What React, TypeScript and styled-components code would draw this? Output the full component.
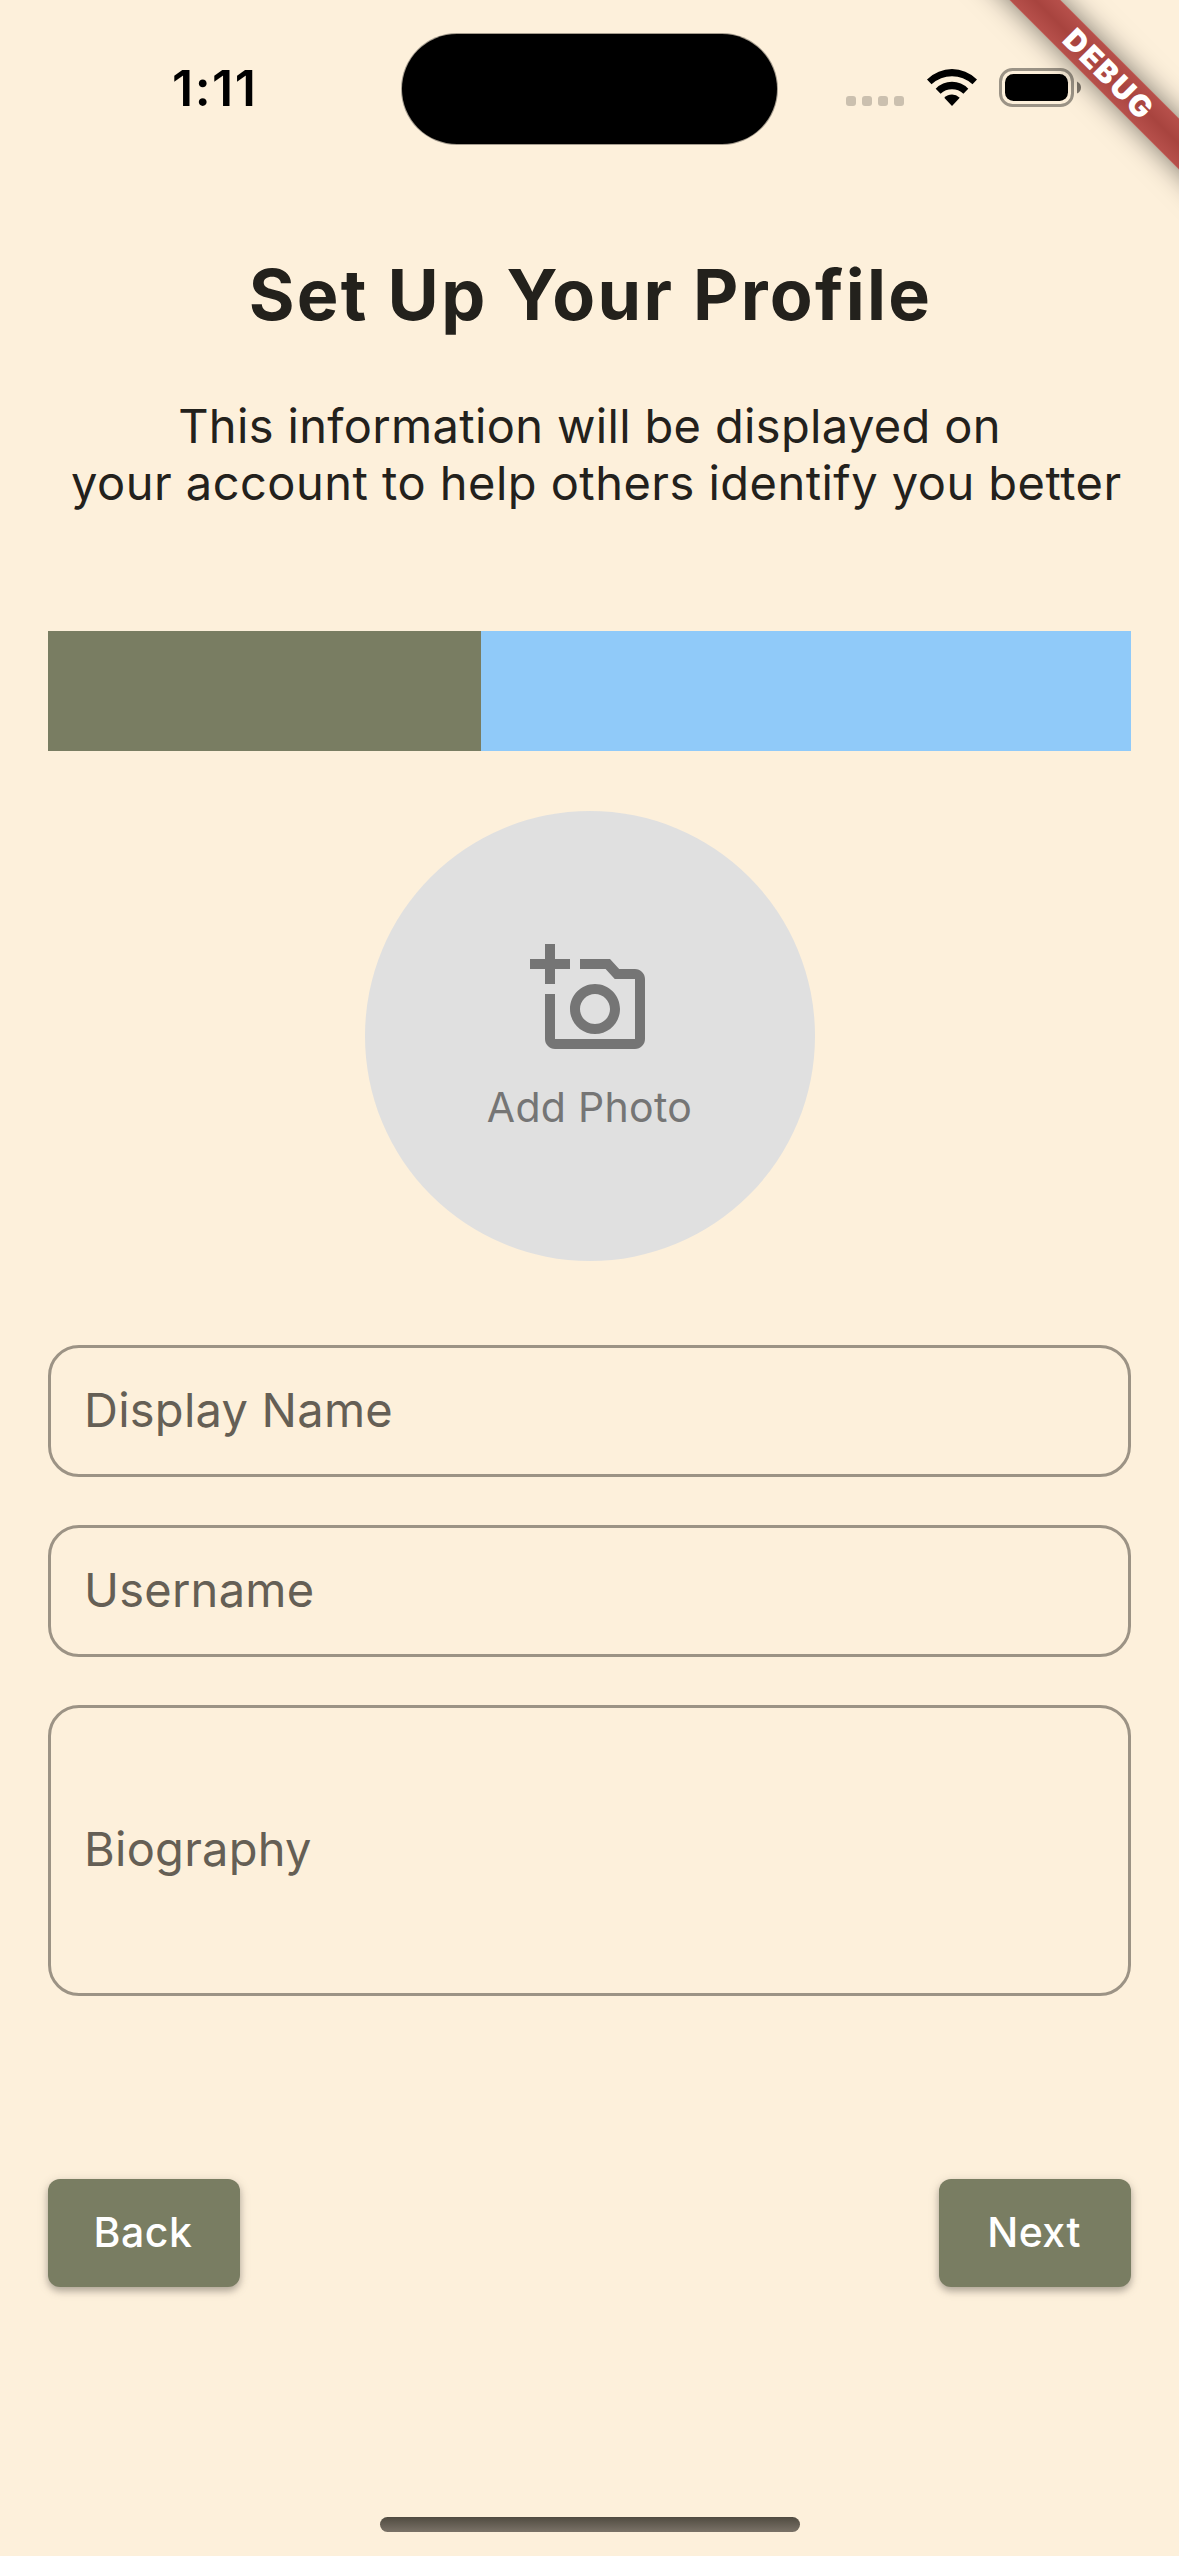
import React from "react";
import styled, { createGlobalStyle } from "styled-components";

const GlobalStyle = createGlobalStyle`
  * { box-sizing: border-box; }
  body { margin: 0; background: #fdf0db; }
`;

const Screen = styled.main`
  position: relative;
  display: flex;
  flex-direction: column;
  width: 1179px;
  height: 2556px;
  overflow: hidden;
  background: #fdf0db;
  color: #23211c;
  font-family: Inter, "Liberation Sans", sans-serif;
`;

const StatusBar = styled.header`
  display: grid;
  grid-template-columns: 402px 375px 1fr;
  height: 177px;
  padding-top: 34px;
  align-items: start;
`;

const Clock = styled.time`
  padding: 23px 0 0 172px;
  color: #000;
  font-size: 50px;
  font-weight: 600;
  line-height: 62px;
  letter-spacing: 1.5px;
`;

const Island = styled.div`
  height: 110px;
  border-radius: 55px;
  background: #000;
  box-shadow: 0 0 0 1px rgba(0, 0, 0, 0.35);
`;

const StatusIcons = styled.div`
  display: flex;
  align-items: flex-start;
  padding: 34px 0 0 69px;
`;

const SignalDots = styled.div`
  display: flex;
  gap: 6px;
  padding-top: 28px;
  margin-right: 22px;
`;

const Dot = styled.i`
  width: 10px;
  height: 10px;
  border-radius: 3px;
  background: #cbc0af;
`;

const WifiIcon = styled.svg`
  width: 52px;
  height: 39px;
  margin-right: 21px;
`;

const Battery = styled.svg`
  width: 84px;
  height: 39px;
`;

const DebugCorner = styled.div`
  position: absolute;
  top: 0;
  right: 0;
  width: 300px;
  height: 300px;
  overflow: hidden;
  pointer-events: none;
`;

const DebugRibbon = styled.div`
  position: absolute;
  top: 53.7px;
  left: -12.3px;
  width: 480px;
  height: 36px;
  padding-left: 6px;
  transform: rotate(45deg);
  background: linear-gradient(#b7504b, #a8443f 50%, #b7504b);
  box-shadow: 0 0 28px rgba(0, 0, 0, 0.5);
  color: #fff;
  text-align: center;
  font-size: 30px;
  font-weight: 900;
  line-height: 36px;
  letter-spacing: 2px;
`;

const Content = styled.div`
  display: flex;
  flex-direction: column;
  padding: 0 48px;
`;

const Title = styled.h1`
  margin: 75px 0 0;
  padding-left: 2px;
  text-align: center;
  font-size: 70px;
  font-weight: 700;
  line-height: 86px;
  letter-spacing: 2.3px;
  font-variant-ligatures: none;
`;

const Subtitle = styled.p`
  margin: 59px 0 0;
  text-align: center;
  font-size: 47px;
  line-height: 57px;
  white-space: nowrap;
`;

const SubtitleLine = styled.span<{ $spacing: number }>`
  display: block;
  letter-spacing: ${(p) => p.$spacing}px;
`;

const Progress = styled.div`
  display: flex;
  height: 120px;
  margin-top: 120px;
  background: #90caf9;
`;

const ProgressDone = styled.div`
  width: 40%;
  background: #797d62;
`;

const PhotoButton = styled.button`
  display: flex;
  flex-direction: column;
  align-items: center;
  align-self: center;
  width: 450px;
  height: 450px;
  margin-top: 60.4px;
  padding: 127.6px 0 0;
  border: 0;
  border-radius: 50%;
  background: #e0e0e0;
  color: #757575;
  font-family: inherit;
`;

const CameraIcon = styled.svg`
  width: 120px;
  height: 120px;
`;

const PhotoLabel = styled.span`
  margin-top: 18px;
  font-size: 41px;
  line-height: 60px;
  letter-spacing: 0.3px;
`;

const Form = styled.form`
  display: flex;
  flex-direction: column;
  gap: 48px;
  margin-top: 83.6px;
`;

const Field = styled.div<{ $height: number; $lift: number }>`
  display: flex;
  align-items: center;
  height: ${(p) => p.$height}px;
  padding: 0 33px ${(p) => p.$lift}px;
  border: 3px solid #9c9385;
  border-radius: 31px;
  color: #655f55;
  font-size: 47px;
  line-height: 60px;
`;

const FieldLabel = styled.label`
  letter-spacing: 0.25px;
`;

const Actions = styled.nav`
  display: flex;
  justify-content: space-between;
  margin-top: 183px;
`;

const ActionButton = styled.button`
  width: 192px;
  height: 108px;
  padding: 0 2px 2px 0;
  border: 0;
  border-radius: 12px;
  background: #797d62;
  box-shadow: 0 4px 6px rgba(0, 0, 0, 0.2), 0 3px 12px rgba(0, 0, 0, 0.16);
  color: #fff;
  font-family: inherit;
  font-size: 41px;
  font-weight: 500;
  letter-spacing: 0.5px;
`;

const HomeIndicator = styled.div`
  width: 420px;
  height: 15px;
  margin: auto auto 24px 380px;
  border-radius: 8px;
  background: linear-gradient(#504b41, #7a7267);
`;

const fields = [
  { label: "Display Name", height: 132, lift: 2 },
  { label: "Username", height: 132, lift: 2 },
  { label: "Biography", height: 291, lift: 3 },
];

export default function App() {
  return (
    <Screen>
      <GlobalStyle />
      <StatusBar>
        <Clock>1:11</Clock>
        <Island />
        <StatusIcons>
          <SignalDots>
            <Dot />
            <Dot />
            <Dot />
            <Dot />
          </SignalDots>
          <WifiIcon viewBox="0 0 52 39">
            <path d="M1 11.5Q12 1 26 1T51 11.5L46.500 16.300Q37.500 8.300 26 8.300T5.500 16.300Z" />
            <path d="M9.700 20.700Q16.500 13.800 26 13.800T42.300 20.700L37.400 25.700Q32.500 21.300 26 21.300T14.600 25.700Z" />
            <path d="M18.300 29.800Q21.700 26.500 26 26.500T33.700 29.800L26 38Z" />
          </WifiIcon>
          <Battery viewBox="0 0 84 39">
            <rect x="1.500" y="1.500" width="72" height="36" rx="12" fill="none" stroke="#9b9386" strokeWidth="3" />
            <rect x="6" y="6" width="63" height="27" rx="8.500" />
            <path d="M78 13.500Q82 15.500 82 19.500T78 25.500Z" fill="#7f776c" />
          </Battery>
        </StatusIcons>
      </StatusBar>
      <Content>
        <Title>Set Up Your Profile</Title>
        <Subtitle>
          <SubtitleLine $spacing={0.35}>This information will be displayed on</SubtitleLine>
          <SubtitleLine $spacing={0.47}>
            {"\u00a0"}your account to help others identify you better
          </SubtitleLine>
        </Subtitle>
        <Progress>
          <ProgressDone />
        </Progress>
        <PhotoButton type="button">
          <CameraIcon viewBox="0 0 24 24" fill="currentColor">
            <path d="M21 6h-3.170L16 4h-6v2h5.120l1.830 2H21v12H5v-9H3v9c0 1.100.9 2 2 2h16c1.100 0 2-.9 2-2V8c0-1.100-.9-2-2-2zM8 14c0 2.760 2.240 5 5 5s5-2.240 5-5-2.240-5-5-5-5 2.240-5 5zm5-3c1.650 0 3 1.350 3 3s-1.350 3-3 3-3-1.350-3-3 1.350-3 3-3zM5 6h3V4H5V1H3v3H0v2h3v3h2z" />
          </CameraIcon>
          <PhotoLabel>Add Photo</PhotoLabel>
        </PhotoButton>
        <Form>
          {fields.map((f) => (
            <Field key={f.label} $height={f.height} $lift={f.lift}>
              <FieldLabel>{f.label}</FieldLabel>
            </Field>
          ))}
        </Form>
        <Actions>
          <ActionButton type="button">Back</ActionButton>
          <ActionButton type="button">Next</ActionButton>
        </Actions>
      </Content>
      <HomeIndicator />
      <DebugCorner>
        <DebugRibbon>DEBUG</DebugRibbon>
      </DebugCorner>
    </Screen>
  );
}
